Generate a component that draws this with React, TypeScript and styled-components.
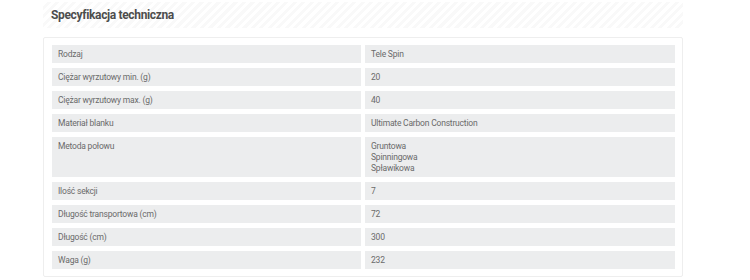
import React from 'react';
import styled, { createGlobalStyle } from 'styled-components';

const GlobalStyle = createGlobalStyle`
  body {
    margin: 0;
    background: #fff;
    font-family: Roboto, "Liberation Sans", sans-serif;
  }
`;

const Page = styled.div`
  width: 640px;
  padding: 2px 0 0 43px;
`;

const Header = styled.div`
  height: 26px;
  display: flex;
  align-items: center;
  padding-left: 8px;
  background: repeating-linear-gradient(
    -45deg,
    #ffffff 0px,
    #ffffff 3px,
    #f9f9f9 3px,
    #f9f9f9 6px
  );
`;

const Title = styled.h2`
  margin: 0;
  font-family: Roboto, "Liberation Sans", sans-serif;
  font-size: 12px;
  font-weight: 700;
  color: #4d4d4d;
  letter-spacing: -0.35px;
`;

const Card = styled.div`
  margin-top: 9px;
  border: 1px solid #eeeeee;
  border-radius: 2px;
  padding: 7px 7px 7px 8px;
  display: flex;
  flex-direction: column;
  gap: 5px;
`;

const Row = styled.div`
  display: grid;
  grid-template-columns: 309px 1fr;
  gap: 4px;
`;

const Cell = styled.div`
  background: #ecedee;
  color: #6a6a6a;
  font-size: 8.5px;
  letter-spacing: -0.2px;
  line-height: 11px;
  padding: 4px 6px 3px;
`;

const specs: [string, string[]][] = [
  ['Rodzaj', ['Tele Spin']],
  ['Ciężar wyrzutowy min. (g)', ['20']],
  ['Ciężar wyrzutowy max. (g)', ['40']],
  ['Materiał blanku', ['Ultimate Carbon Construction']],
  ['Metoda połowu', ['Gruntowa', 'Spinningowa', 'Spławikowa']],
  ['Ilość sekcji', ['7']],
  ['Długość transportowa (cm)', ['72']],
  ['Długość (cm)', ['300']],
  ['Waga (g)', ['232']],
];

function App() {
  return (
    <>
      <GlobalStyle />
      <Page>
        <Header>
          <Title>Specyfikacja techniczna</Title>
        </Header>
        <Card>
          {specs.map(([label, values]) => (
            <Row key={label}>
              <Cell>{label}</Cell>
              <Cell>
                {values.map((v) => (
                  <div key={v}>{v}</div>
                ))}
              </Cell>
            </Row>
          ))}
        </Card>
      </Page>
    </>
  );
}

export default App;
